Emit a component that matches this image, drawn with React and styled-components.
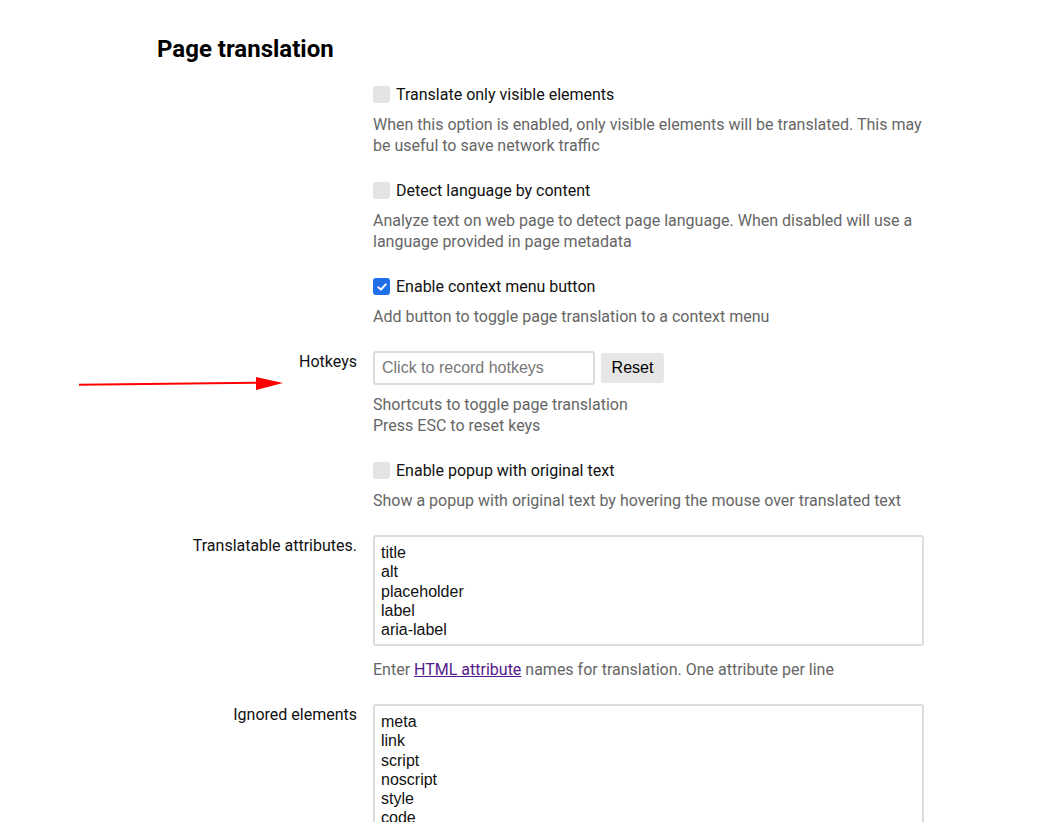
import React from "react";
import styled, { createGlobalStyle } from "styled-components";

const GlobalStyle = createGlobalStyle`
  html, body {
    margin: 0;
    padding: 0;
    background: #fff;
  }
  body {
    font-family: Roboto, "Noto Sans", sans-serif;
    color: #111;
  }
`;

const Page = styled.div`
  position: relative;
  width: 1042px;
  height: 822px;
  overflow: hidden;
  padding: 33px 0 0 157px;
  box-sizing: border-box;
`;

const Heading = styled.h2`
  margin: 0 0 19px;
  font-size: 24px;
  line-height: 32px;
  font-weight: 700;
  color: #000;
`;

const Grid = styled.div`
  display: grid;
  grid-template-columns: 200px 551px;
  column-gap: 16px;
  row-gap: 24px;
`;

const Label = styled.div`
  grid-column: 1;
  text-align: right;
  font-size: 16px;
  line-height: 21px;
  color: #111;
`;

const Field = styled.div`
  grid-column: 2;
  display: flex;
  flex-direction: column;
  align-items: flex-start;
`;

const CheckRow = styled.label`
  display: flex;
  align-items: center;
  gap: 6px;
  font-size: 16px;
  line-height: 21px;
  color: #111;
`;

const Box = styled.span`
  width: 17px;
  height: 17px;
  border-radius: 3px;
  background: ${(p) => (p.$checked ? "#1f6fe8" : "#e4e4e4")};
  display: inline-flex;
  align-items: center;
  justify-content: center;
  flex-shrink: 0;
`;

const Desc = styled.div`
  margin-top: ${(p) => p.$gap ?? 9}px;
  font-size: 16px;
  line-height: 21px;
  color: #666;
`;

const Link = styled.a`
  color: #551a8b;
  text-decoration: underline;
`;

const HotkeyRow = styled.div`
  display: flex;
  align-items: center;
  gap: 6px;
`;

const HotkeyInput = styled.input`
  width: 222px;
  height: 34px;
  box-sizing: border-box;
  border: 2px solid #dcdcdc;
  border-radius: 3px;
  padding: 0 7px;
  margin: 0;
  font-family: "Liberation Sans", Arial, sans-serif;
  font-size: 16px;
  color: #111;
  outline: none;
  &::placeholder {
    color: #777;
  }
`;

const Button = styled.button`
  height: 30px;
  width: 63px;
  border: none;
  border-radius: 3px;
  background: #e6e6e6;
  font-family: "Liberation Sans", Arial, sans-serif;
  font-size: 16px;
  color: #000;
  padding: 0;
  margin: 0;
`;

const TextArea = styled.textarea`
  display: block;
  width: 551px;
  height: ${(p) => p.$h}px;
  box-sizing: border-box;
  border: 2px solid #dcdcdc;
  border-radius: 3px;
  padding: 6px 6px 5px;
  margin: 0;
  font-family: "Liberation Sans", Arial, sans-serif;
  font-size: 16px;
  line-height: 19.3px;
  color: #111;
  resize: none;
  overflow: hidden;
  outline: none;
`;

const Arrow = styled.svg`
  position: absolute;
  left: 70px;
  top: 370px;
  width: 220px;
  height: 30px;
`;

function Check({ checked, children }) {
  return (
    <CheckRow>
      <Box $checked={checked}>
        {checked && (
          <svg width="12" height="12" viewBox="0 0 12 12">
            <path d="M2.3 6.2 L4.9 8.6 L9.8 3.4" fill="none" stroke="#fff" strokeWidth="2" strokeLinecap="round" strokeLinejoin="round" />
          </svg>
        )}
      </Box>
      {children}
    </CheckRow>
  );
}

export default function App() {
  return (
    <>
      <GlobalStyle />
      <Page>
        <Heading>Page translation</Heading>
        <Grid>
          <Field>
            <Check>Translate only visible elements</Check>
            <Desc>
              When this option is enabled, only visible elements will be translated. This may
              be useful to save network traffic
            </Desc>
          </Field>

          <Field>
            <Check>Detect language by content</Check>
            <Desc>
              Analyze text on web page to detect page language. When disabled will use a
              language provided in page metadata
            </Desc>
          </Field>

          <Field>
            <Check checked>Enable context menu button</Check>
            <Desc>Add button to toggle page translation to a context menu</Desc>
          </Field>

          <Label>Hotkeys</Label>
          <Field>
            <HotkeyRow>
              <HotkeyInput placeholder="Click to record hotkeys" readOnly />
              <Button>Reset</Button>
            </HotkeyRow>
            <Desc $gap={9}>
              Shortcuts to toggle page translation
              <br />
              Press ESC to reset keys
            </Desc>
          </Field>

          <Field>
            <Check>Enable popup with original text</Check>
            <Desc>Show a popup with original text by hovering the mouse over translated text</Desc>
          </Field>

          <Label>Translatable attributes.</Label>
          <Field>
            <TextArea
              $h={111}
              readOnly
              value={"title\nalt\nplaceholder\nlabel\naria-label"}
            />
            <Desc $gap={13}>
              Enter <Link href="#">HTML attribute</Link> names for translation. One attribute per line
            </Desc>
          </Field>

          <Label>Ignored elements</Label>
          <Field>
            <TextArea
              $h={160}
              readOnly
              value={"meta\nlink\nscript\nnoscript\nstyle\ncode\npre"}
            />
          </Field>
        </Grid>
        <Arrow viewBox="0 0 220 30">
          <line x1="9" y1="14.7" x2="190" y2="12.8" stroke="#f00" strokeWidth="2" />
          <polygon points="186,7 213,13 186,20" fill="#f00" />
        </Arrow>
      </Page>
    </>
  );
}
